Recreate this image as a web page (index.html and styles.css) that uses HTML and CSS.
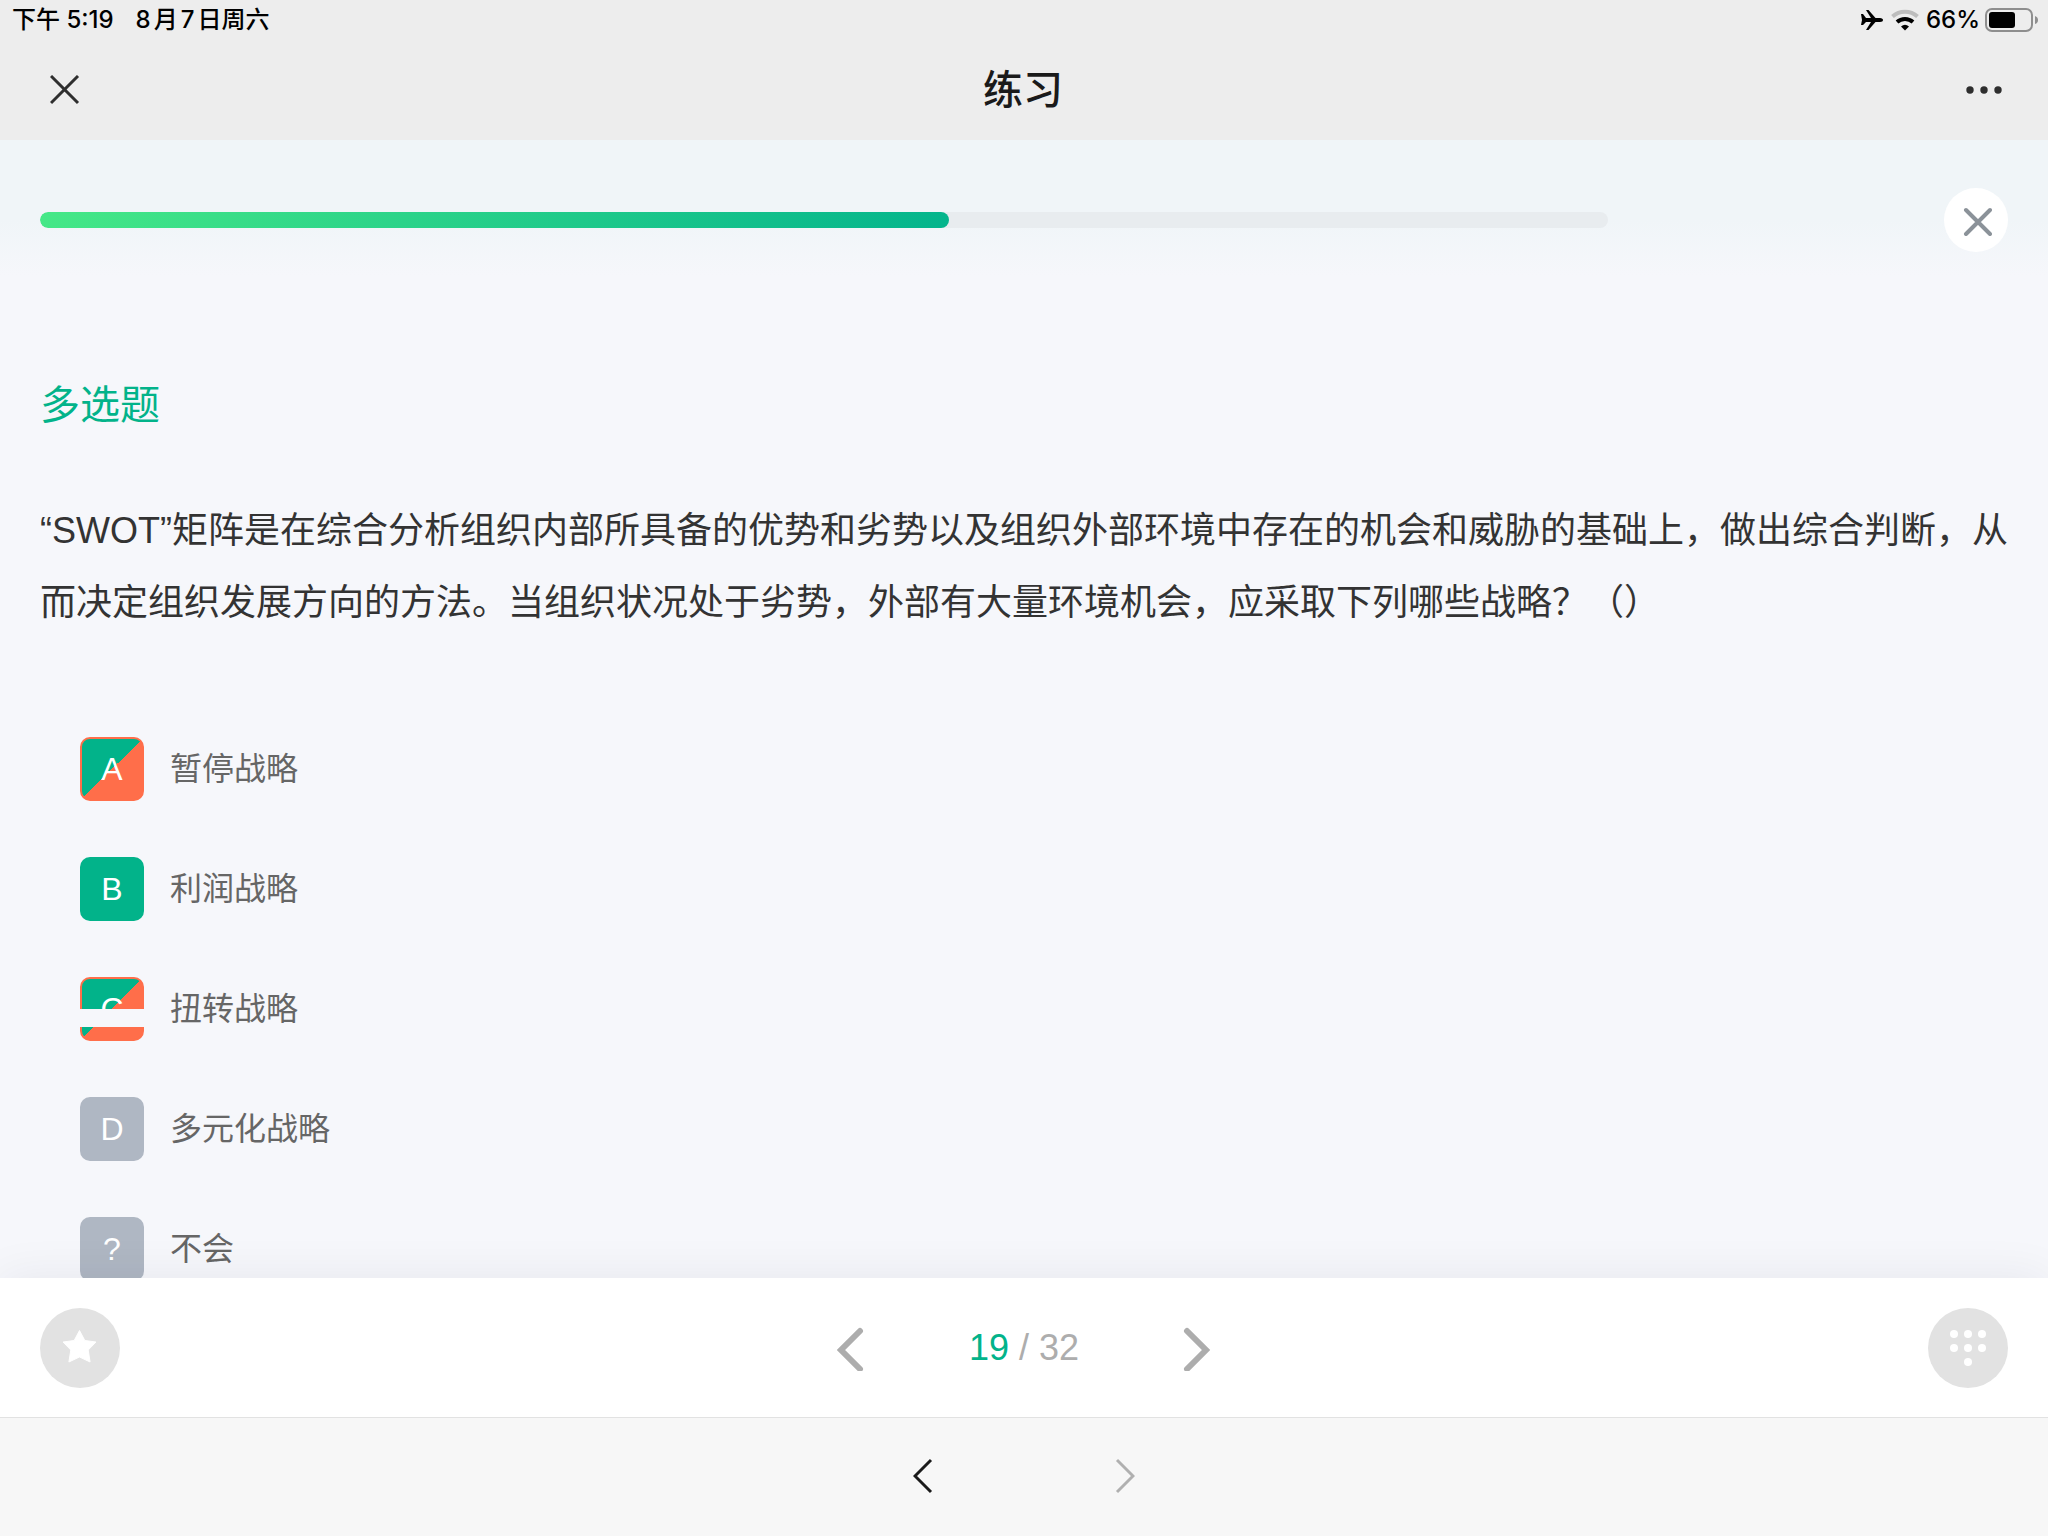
FILE: index.html
```
<!DOCTYPE html>
<html lang="zh-CN">
<head>
<meta charset="UTF-8">
<meta name="viewport" content="width=device-width, initial-scale=1.0">
<title>练习</title>
<link rel="stylesheet" href="styles.css">
</head>
<body>
<div class="status-bar">
    <div class="status-left">
        <span>下午 5:19</span>
        <span class="date">8月7日周六</span>
    </div>
    <div class="status-right">
        <svg class="icon-plane" width="24" height="22" viewBox="0 0 24 22">
            <path d="M1 5h2l3 4h5L6 1h2.500l7 8H20c2 0 3 1 3 2s-1 2-3 2h-4.500l-7 8H6l5-8H6l-3 3H1l1-5z"/>
        </svg>
        <svg class="icon-wifi" width="28" height="22" viewBox="0 0 28 22">
            <path d="M1.500 7.500a18.500 18.500 0 0 1 25 0" fill="none" stroke="#bdbdbd" stroke-width="4"/>
            <path d="M6 13a12 12 0 0 1 16 0" fill="none" stroke="#000" stroke-width="4"/>
            <path d="M10 17.500q4-3.500 8 0l-4 4z"/>
        </svg>
        <span>66%</span>
        <svg class="icon-battery" width="54" height="24" viewBox="0 0 54 24">
            <rect x="1" y="1" width="46" height="22" rx="6" fill="none" stroke="#8e8e8e" stroke-width="2"/>
            <rect x="4" y="4" width="26" height="16" rx="3"/>
            <path d="M50 8q3 1 3 4t-3 4z" fill="#8e8e8e"/>
        </svg>
    </div>
</div>

<header class="nav-bar">
    <button type="button" class="icon-button" aria-label="关闭">
        <svg width="30" height="30" viewBox="0 0 30 30">
            <path d="M1 1l27 27M28 1L1 28" fill="none" stroke="#2e2e2e" stroke-width="3"/>
        </svg>
    </button>
    <h1>练习</h1>
    <button type="button" class="icon-button" aria-label="更多">
        <svg width="36" height="8" viewBox="0 0 36 8">
            <g fill="#2e2e2e">
                <circle cx="4" cy="4" r="3.700"/>
                <circle cx="18" cy="4" r="3.700"/>
                <circle cx="32" cy="4" r="3.700"/>
            </g>
        </svg>
    </button>
</header>

<main class="quiz">
    <div class="progress-row">
        <div class="progress" role="progressbar" aria-label="进度" aria-valuemin="0" aria-valuemax="100" aria-valuenow="58">
            <div class="progress-fill" style="width: 58%"></div>
        </div>
        <button type="button" class="quiz-close" aria-label="退出练习">
            <svg width="32" height="32" viewBox="0 0 32 32">
                <path d="M6 6l24 24M30 6L6 30" fill="none" stroke="#8b9299" stroke-width="4" stroke-linecap="round"/>
            </svg>
        </button>
    </div>

    <h2>多选题</h2>
    <p class="question">“SWOT”矩阵是在综合分析组织内部所具备的优势和劣势以及组织外部环境中存在的机会和威胁的基础上，做出综合判断，从而决定组织发展方向的方法。当组织状况处于劣势，外部有大量环境机会，应采取下列哪些战略？（）</p>

    <div class="options">
        <button type="button" class="option"><span class="mark half">A</span><span>暂停战略</span></button>
        <button type="button" class="option"><span class="mark right">B</span><span>利润战略</span></button>
        <button type="button" class="option"><span class="mark half covered">C</span><span>扭转战略</span></button>
        <button type="button" class="option"><span class="mark">D</span><span>多元化战略</span></button>
        <button type="button" class="option"><span class="mark">?</span><span>不会</span></button>
    </div>
</main>

<footer class="pager">
    <button type="button" class="round-button" aria-label="收藏">
        <svg width="36" height="36" viewBox="0 0 36 36">
            <path d="M17.500 0.500l5.300 10L34 12l-7.800 8 1.900 12L17.500 27l-10.600 5 1.900-12L1 12l11.200-1.500z" fill="#fff" stroke="#fff" stroke-linejoin="round"/>
        </svg>
    </button>
    <div class="pager-center">
        <button type="button" class="icon-button" aria-label="上一题">
            <svg width="28" height="46" viewBox="0 0 28 46">
                <path d="M23 6L4 25l19 19" fill="none" stroke="#adadad" stroke-width="6" stroke-linecap="round"/>
            </svg>
        </button>
        <div class="page-count"><span class="current">19</span> / 32</div>
        <button type="button" class="icon-button" aria-label="下一题">
            <svg width="28" height="46" viewBox="0 0 28 46">
                <path d="M4 6l19 19L4 44" fill="none" stroke="#adadad" stroke-width="6" stroke-linecap="round"/>
            </svg>
        </button>
    </div>
    <button type="button" class="round-button" aria-label="答题卡">
        <svg width="36" height="36" viewBox="0 0 36 36">
            <g fill="#fff">
                <circle cx="4" cy="4" r="4"/>
                <circle cx="18" cy="4" r="4"/>
                <circle cx="32" cy="4" r="4"/>
                <circle cx="4" cy="18" r="4"/>
                <circle cx="18" cy="18" r="4"/>
                <circle cx="32" cy="18" r="4"/>
                <circle cx="18" cy="32" r="4"/>
            </g>
        </svg>
    </button>
</footer>

<nav class="browser-bar">
    <button type="button" class="icon-button" aria-label="后退">
        <svg width="20" height="36" viewBox="0 0 20 36">
            <path d="M18 2L2 18l16 16" fill="none" stroke="#1a1a1a" stroke-width="3"/>
        </svg>
    </button>
    <button type="button" class="icon-button" aria-label="前进" disabled>
        <svg width="20" height="36" viewBox="0 0 20 36">
            <path d="M2 2l16 16L2 34" fill="none" stroke="#b0b0b0" stroke-width="3"/>
        </svg>
    </button>
</nav>
</body>
</html>
```

FILE: styles.css
```
* {
    box-sizing: border-box;
}

body {
    margin: 0;
    height: 100vh;
    display: flex;
    flex-direction: column;
    overflow: hidden;
    background-color: #f6f7fb;
    font-family: "Liberation Sans", "Noto Sans CJK SC", sans-serif;
    text-spacing-trim: space-all;
}

h1, h2, p {
    margin: 0;
    font-weight: normal;
}

button {
    border: none;
    padding: 0;
    background: none;
    color: inherit;
    font: inherit;
    cursor: pointer;
}

svg {
    display: block;
}

.icon-button {
    padding: 10px;
}

/* status bar */
.status-bar {
    height: 40px;
    padding: 0 9px 0 12px;
    display: flex;
    justify-content: space-between;
    align-items: center;
    background-color: #ededed;
    color: #000;
    font-family: Inter, "Noto Sans CJK SC", sans-serif;
    font-size: 24px;
    font-weight: 500;
    line-height: 40px;
}

.status-left {
    display: flex;
    gap: 22px;
}

.date {
    text-autospace: normal;
}

.status-right {
    display: flex;
    align-items: center;
    gap: 5px;
}

.icon-plane, .icon-wifi {
    margin-right: 2px;
}

/* title bar */
.nav-bar {
    height: 100px;
    padding: 0 36px 0 40px;
    display: flex;
    justify-content: space-between;
    align-items: center;
    background-color: #ededed;
}

.nav-bar h1 {
    color: #1a1a1a;
    font-size: 40px;
    font-weight: 500;
    line-height: 56px;
}

/* question area */
.quiz {
    flex: 1;
    min-height: 0;
    overflow: hidden;
    padding: 48px 40px 0;
    background: linear-gradient(#f0f5f8 0, #f0f5f8 80px, #f6f7fb 136px);
}

.progress-row {
    display: flex;
    align-items: center;
    gap: 336px;
    margin-bottom: 123px;
}

.progress {
    flex: 1;
    height: 16px;
    border-radius: 8px;
    background-color: #e8ecef;
    overflow: hidden;
}

.progress-fill {
    height: 100%;
    border-radius: 8px;
    background: linear-gradient(135deg, #46e887, #03b48c);
}

.quiz-close {
    width: 64px;
    height: 64px;
    border-radius: 50%;
    background-color: #fff;
    display: flex;
    align-items: center;
    justify-content: center;
}

.quiz h2 {
    color: #02b38a;
    font-size: 40px;
    line-height: 60px;
    margin-bottom: 60px;
}

.question {
    color: #333;
    font-size: 36px;
    line-height: 72px;
    margin-bottom: 98px;
}

.options {
    display: flex;
    flex-direction: column;
    gap: 56px;
    padding: 0 40px;
}

.option {
    display: flex;
    align-items: center;
    gap: 26px;
    color: #666;
    font-size: 32px;
    line-height: 64px;
    text-align: left;
}

.mark {
    position: relative;
    width: 64px;
    height: 64px;
    border-radius: 10px;
    background-color: #afb7c3;
    color: #fff;
    text-align: center;
}

.mark.right {
    background-color: #02b38a;
}

/* picked but only partly correct */
.mark.half {
    border: 2px solid #ff6e4a;
    background: linear-gradient(135deg, #02b38a 50%, #ff6e4a 50%);
    line-height: 60px;
}

.mark.covered::after {
    content: "";
    position: absolute;
    left: -2px;
    right: -2px;
    top: 30px;
    height: 18px;
    background-color: #f6f7fb;
}

/* bottom pager */
.pager {
    position: relative;
    height: 139px;
    padding: 0 40px;
    display: flex;
    justify-content: space-between;
    align-items: center;
    background-color: #fff;
    box-shadow: 0 0 48px rgba(30, 35, 60, 0.07);
}

.round-button {
    width: 80px;
    height: 80px;
    border-radius: 50%;
    background-color: #e2e2e2;
    display: flex;
    align-items: center;
    justify-content: center;
}

.pager-center {
    display: flex;
    align-items: center;
    gap: 94px;
}

.page-count {
    color: #adadad;
    font-size: 36px;
    line-height: 48px;
}

.page-count .current {
    color: #02b38a;
}

/* browser toolbar */
.browser-bar {
    position: relative;
    height: 119px;
    padding-bottom: 2px;
    display: flex;
    justify-content: center;
    align-items: center;
    gap: 162px;
    border-top: 1px solid #e2e2e2;
    background-color: #f7f7f7;
}
```
